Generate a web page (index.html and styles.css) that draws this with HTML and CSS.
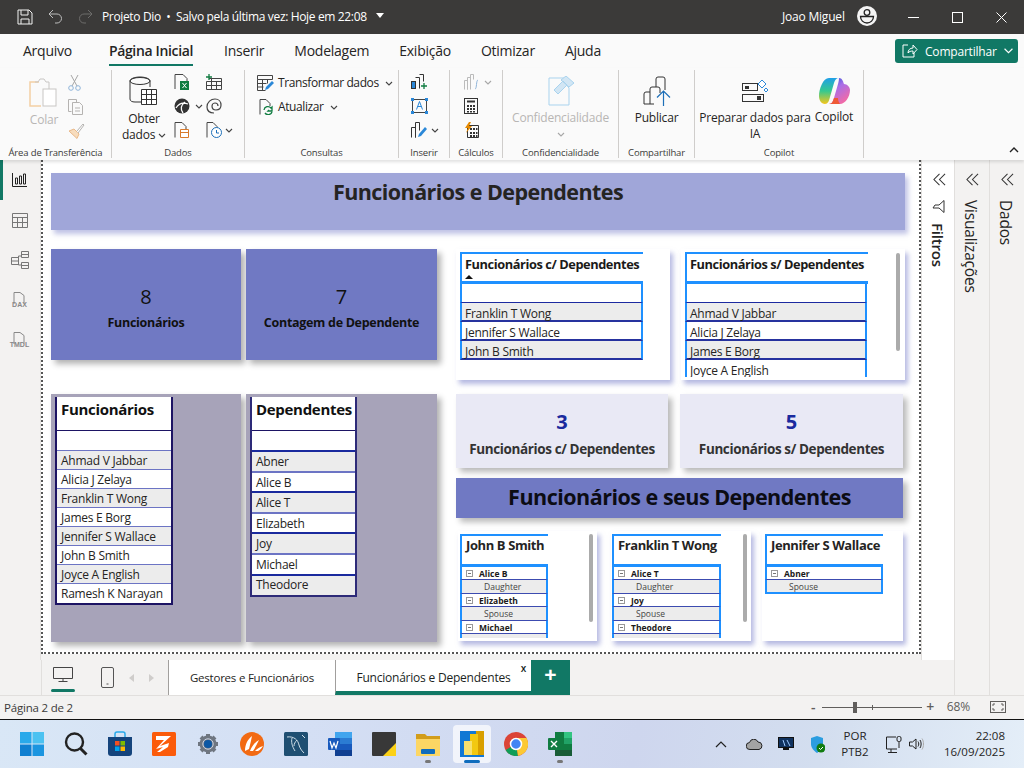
FILE: index.html
```html
<!doctype html>
<html lang="pt-BR">
<head>
<meta charset="utf-8">
<title>Projeto Dio</title>
<link rel="stylesheet" href="styles.css">
</head>
<body>
<svg class="defs" width="0" height="0">
  <symbol id="chev" viewBox="0 0 8 5"><path d="M1 1l3 3 3-3" fill="none" stroke="#444" stroke-width="1.1"/></symbol>
  <symbol id="collapse" viewBox="0 0 14 14"><path d="M7 1L1 7l6 6M13 1L7 7l6 6" fill="none" stroke="#333" stroke-width="1.1"/></symbol>
</svg>

<header class="titlebar">
  <svg class="tb-save" width="16" height="16" viewBox="0 0 16 16"><path d="M1 1h11l3 3v11H1zM4 1v5h7V1M4 15v-5h8v5" fill="none" stroke="#f2f2f2"/></svg>
  <svg class="tb-undo" width="15" height="14" viewBox="0 0 15 14"><path d="M1 5h8a4.500 4.500 0 0 1 0 9H7M1 5l4-4M1 5l4 4" fill="none" stroke="#bdbdbd" transform="translate(0 -1)"/></svg>
  <svg class="tb-redo" width="15" height="14" viewBox="0 0 15 14"><path d="M14 5H6a4.500 4.500 0 0 0 0 9h2M14 5l-4-4M14 5l-4 4" fill="none" stroke="#6d6c6b" transform="translate(0 -1)"/></svg>
  <span class="tb-title">Projeto Dio &nbsp;•&nbsp; Salvo pela última vez: Hoje em 22:08</span>
  <span class="tb-caret"></span>
  <span class="tb-user">Joao Miguel</span>
  <svg class="tb-avatar" width="20" height="20" viewBox="0 0 20 20"><circle cx="10" cy="10" r="10" fill="#f4f4f4"/><circle cx="10" cy="6.500" r="2.800" fill="none" stroke="#222" stroke-width="1.300"/><path d="M3.500 10.500h13a6.500 6.500 0 0 1-13 0z" fill="none" stroke="#222" stroke-width="1.300"/></svg>
  <span class="tb-controls">
    <svg width="11" height="11" viewBox="0 0 11 11"><path d="M0 5.500h11" stroke="#fff"/></svg>
    <svg width="11" height="11" viewBox="0 0 11 11"><rect x=".5" y=".5" width="10" height="10" fill="none" stroke="#fff"/></svg>
    <svg width="11" height="11" viewBox="0 0 11 11"><path d="M.5.500l10 10M10.500.500l-10 10" stroke="#fff"/></svg>
  </span>
</header>

<nav class="menu">
  <a class="menu-item first">Arquivo</a>
  <a class="menu-item active">Página Inicial</a>
  <a class="menu-item">Inserir</a>
  <a class="menu-item">Modelagem</a>
  <a class="menu-item">Exibição</a>
  <a class="menu-item">Otimizar</a>
  <a class="menu-item">Ajuda</a>
  <button class="share">
    <svg width="16" height="14" viewBox="0 0 16 14"><path d="M6 1H1v12h11V9M6 9c0-3 2-5 5-5V1l4 4.500L11 10V7C9 7 7 7.500 6 9z" fill="none" stroke="#fff"/></svg>
    Compartilhar
    <svg width="9" height="6" viewBox="0 0 8 5"><path d="M.5.500L4 4 7.500.500" fill="none" stroke="#fff"/></svg>
  </button>
</nav>

<section class="ribbon">
  <div class="group g-clip">
    <div class="group-body">
      <div class="big disabled">
        <svg width="30" height="31" viewBox="0 0 30 31"><path d="M10 5H1v24h11" fill="none" stroke="#f4cfa4" stroke-width="1.500"/><path d="M6 5h3l2-3h4l2 3h3v7" fill="none" stroke="#c8c6c4"/><rect x="14" y="12" width="13" height="17" fill="#fff" stroke="#c8c6c4"/></svg>
        <span class="big-text">Colar</span>
      </div>
      <div class="stack">
        <svg width="13" height="16" viewBox="0 0 13 16"><path d="M3 0l6 11M10 0L4 11" stroke="#a6a6a6" fill="none"/><circle cx="3" cy="13" r="2.300" fill="none" stroke="#8fb4d9"/><circle cx="10" cy="13" r="2.300" fill="none" stroke="#8fb4d9"/></svg>
        <svg width="16" height="16" viewBox="0 0 16 16"><path d="M3 12H0V0h8v3" fill="none" stroke="#b5b3b1" transform="translate(.5 .5)"/><path d="M4.500 3.500h7l3 3v9h-10zM7 9h5M7 12h5" fill="none" stroke="#b5b3b1"/></svg>
        <svg width="17" height="16" viewBox="0 0 17 16"><path d="M1 8l5-2 5 5-2 4.500z" fill="#f7dcbd" stroke="#e9b98a"/><path d="M9 8l6-7 1 1-6 8" fill="#fff" stroke="#b5b3b1"/></svg>
      </div>
    </div>
    <div class="group-label">Área de Transferência</div>
  </div>

  <div class="group g-data">
    <div class="group-body">
      <div class="big">
        <svg width="30" height="31" viewBox="0 0 30 31"><path d="M16 26H6c-3 0-5-1-5-3V5c0-2 4-4 10-4s10 2 10 4v6" fill="none" stroke="#333"/><ellipse cx="11" cy="5" rx="10" ry="3.500" fill="none" stroke="#333"/><path d="M12.500 13.500h15v15h-15zM12.500 18.500h15M12.500 23.500h15M17.500 13.500v15M22.500 13.500v15" fill="#fff" stroke="#333"/></svg>
        <span class="big-text">Obter<br>dados <svg class="chev" width="8" height="5"><use href="#chev"/></svg></span>
      </div>
      <div class="icon-grid">
        <svg width="16" height="16" viewBox="0 0 16 16"><path d="M1 15V.500h8l4 4V7" fill="none" stroke="#444"/><rect x="6" y="7" width="9" height="9" fill="#107c41"/><path d="M8.500 9l4 5M12.500 9l-4 5" stroke="#fff"/></svg>
        <svg width="16" height="16" viewBox="0 0 16 16"><path d="M3 4.500h12.500v11H.500v-8h15M5.500 4.500v11M10.500 7.500v8M.5 11.500h15" fill="none" stroke="#444"/><path d="M3 0v6M0 3h6" stroke="#107c41" stroke-width="1.300"/></svg>
        <span class="with-chev"><svg width="18" height="16" viewBox="0 0 18 16"><circle cx="8" cy="8" r="7.500" fill="#333"/><path d="M2 10c3-5 7-6 12-4M9 15c-3-4-2-8 2-11" stroke="#fff" fill="none" stroke-width="1.300"/></svg><svg class="chev" width="8" height="5"><use href="#chev"/></svg></span>
        <svg width="16" height="16" viewBox="0 0 16 16"><path d="M8 15c-4 0-7-2-7-6 0-5 4-8 8-8 4 0 6 3 6 6 0 3-2 5-5 5-2 0-4-1-4-4 0-2 2-3 3-3 2 0 3 1 3 3" fill="none" stroke="#444" stroke-width="1.200"/></svg>
        <svg width="16" height="16" viewBox="0 0 16 16"><path d="M1 15.500V.500h7l4 4V7" fill="none" stroke="#444"/><path d="M6.500 7.500h8v8h-8zM6.500 10.500h8" fill="#fff" stroke="#d97a2b"/></svg>
        <span class="with-chev"><svg width="16" height="16" viewBox="0 0 16 16"><path d="M1 15.500V.500h6l4 4V6" fill="none" stroke="#444"/><circle cx="10.500" cy="10.500" r="5" fill="#fff" stroke="#1d6fb8"/><path d="M10.500 8v3h2.500" fill="none" stroke="#1d6fb8"/></svg><svg class="chev" width="8" height="5"><use href="#chev"/></svg></span>
      </div>
    </div>
    <div class="group-label">Dados</div>
  </div>

  <div class="group g-query">
    <div class="group-body rows">
      <span class="row-btn">
        <svg width="17" height="16" viewBox="0 0 17 16"><path d="M.5.500h15v4H.5zM.5 4.500v11h8M5.500 4.500v11M10.500 4.500v4M.5 8.500h9M.5 12h6" fill="none" stroke="#444"/><path d="M8 15l1-3 6-6 2 2-6 6z" fill="#2b88d8"/></svg>
        Transformar dados <svg class="chev" width="8" height="5"><use href="#chev"/></svg>
      </span>
      <span class="row-btn second">
        <svg width="15" height="16" viewBox="0 0 15 16"><path d="M1 15.500V.500h6l4 4V7" fill="none" stroke="#444"/><path d="M5 11a4 4 0 0 1 7-2l1-1v4h-4l1-1M13 13a4 4 0 0 1-7 1" fill="none" stroke="#107c41" stroke-width="1.300"/></svg>
        Atualizar <svg class="chev" width="8" height="5"><use href="#chev"/></svg>
      </span>
    </div>
    <div class="group-label">Consultas</div>
  </div>

  <div class="group g-insert">
    <div class="group-body col">
      <svg width="17" height="16" viewBox="0 0 17 16"><rect x=".5" y="7.500" width="4" height="7" fill="#2b88d8" stroke="#333"/><path d="M4.500 3.500h4v11M8.500.500h4v7" fill="none" stroke="#333"/><path d="M13 9v6M10 12h6" stroke="#107c41" stroke-width="1.300"/></svg>
      <svg width="17" height="16" viewBox="0 0 17 16"><rect x="1.500" y="1.500" width="14" height="13" fill="none" stroke="#444"/><path d="M8.500 3.500l-3 8M8.500 3.500l3 8M6.500 8.500h4" fill="none" stroke="#2b88d8"/><path d="M0 0h3v3H0zM14 0h3v3h-3zM0 13h3v3H0zM14 13h3v3h-3z" fill="#2b88d8"/></svg>
      <span class="with-chev"><svg width="17" height="16" viewBox="0 0 17 16"><path d="M.5 15.500v-10h4v10M4.500 15.500v-15h4v8" fill="none" stroke="#333"/><path d="M7 15l1-3 6-7 2 2-6 7z" fill="#2b88d8"/></svg><svg class="chev" width="8" height="5"><use href="#chev"/></svg></span>
    </div>
    <div class="group-label">Inserir</div>
  </div>

  <div class="group g-calc">
    <div class="group-body col">
      <span class="with-chev"><svg width="17" height="16" viewBox="0 0 17 16"><path d="M.5 15.500v-9h3v9M3.500 15.500V3.500h3v12M6.500 10V.500h3v5" fill="none" stroke="#bbb"/><path d="M11 15c2 0 1-9 3-9" fill="none" stroke="#8fb4d9"/></svg><svg class="chev faint" width="8" height="5"><use href="#chev"/></svg></span>
      <svg width="14" height="16" viewBox="0 0 14 16"><rect x=".5" y=".5" width="13" height="15" fill="none" stroke="#333"/><path d="M3 2.500h8v2H3z" fill="#333"/><path d="M3 7h2v2H3zM6 7h2v2H6zM9 7h2v2H9zM3 10h2v2H3zM6 10h2v2H6zM9 10h2v2H9zM3 13h2v1.500H3zM6 13h2v1.500H6zM9 13h2v1.500H9z" fill="#333"/></svg>
      <svg width="15" height="16" viewBox="0 0 15 16"><path d="M3.500 3.500h11v12h-11z" fill="none" stroke="#333"/><path d="M6 6h2v2H6zM9 6h2v2H9zM12 6h1.500v2H12zM6 10h2v2H6zM9 10h2v2H9zM12 10h1.500v2H12zM6 13h2v2H6zM9 13h2v2H9zM12 13h1.500v2H12z" fill="#333"/><path d="M5 0L1 6h3L2 11l6-7H5l2-4z" fill="#e68a00"/></svg>
    </div>
    <div class="group-label">Cálculos</div>
  </div>

  <div class="group g-conf">
    <div class="group-body centered disabled">
      <svg width="28" height="30" viewBox="0 0 28 30"><path d="M1 2h15v4l5 6v17H1z" fill="none" stroke="#a9d3ee"/><path d="M6 14l9-9 4 4-9 9zM13 4l5-4 8 7-5 4z" fill="#d2e6f4" stroke="#a9d3ee"/></svg>
      <span class="big-text">Confidencialidade<br><svg class="chev faint" width="8" height="5"><use href="#chev"/></svg></span>
    </div>
    <div class="group-label">Confidencialidade</div>
  </div>

  <div class="group g-pub">
    <div class="group-body centered">
      <svg width="28" height="30" viewBox="0 0 28 30"><path d="M11 28H1V18q0-2 2-2h4v-3q0-2 2-2h4V3q0-2 2-2h5q2 0 2 2v11" fill="none" stroke="#333"/><path d="M7 16v12M13 11h2q2 0 2 2v4" fill="none" stroke="#333"/><path d="M20.500 30V15M14 21.500l6.500-6.500 6.500 6.500" fill="none" stroke="#1d6fb8" stroke-width="1.200"/></svg>
      <span class="big-text">Publicar</span>
    </div>
    <div class="group-label">Compartilhar</div>
  </div>

  <div class="group g-copilot">
    <div class="group-body copilot">
      <div class="ai">
        <svg width="26" height="24" viewBox="0 0 26 24"><rect x=".5" y="4.500" width="15" height="7" fill="none" stroke="#333"/><rect x="3" y="7" width="4" height="3" fill="#333"/><rect x=".5" y="15.500" width="21" height="7" fill="none" stroke="#333"/><rect x="15" y="17" width="4" height="4" fill="#333"/><path d="M16 5l4-4 4 4-4 4zM22 11l2-2 2 2-2 2z" fill="#fff" stroke="#2b88d8"/></svg>
        <span class="big-text">Preparar dados para<br>IA</span>
      </div>
      <div class="cop">
        <svg width="31" height="28" viewBox="0 0 31 28"><defs><linearGradient id="cpa" x1="0" y1="0" x2="0" y2="1"><stop offset="0" stop-color="#1f9fe8"/><stop offset=".5" stop-color="#35c98f"/><stop offset="1" stop-color="#f7c61a"/></linearGradient><linearGradient id="cpb" x1="0" y1="0" x2=".6" y2="1"><stop offset="0" stop-color="#1a55d6"/><stop offset=".45" stop-color="#a96ee8"/><stop offset="1" stop-color="#f26aa6"/></linearGradient></defs><path d="M10 1h10c-3 0-4 2-5 5l-4 14c-1 4-2 7-5 7-4 0-6-4-6-8C0 12 4 1 10 1z" fill="url(#cpa)"/><path d="M20 1c3 0 4 3 5 6 3 0 6 3 6 6 0 7-5 14-10 14H10c3 0 4-3 5-6l4-14c1-3 1-6 1-6z" fill="url(#cpb)"/><path d="M10 27c3 0 4-3 5-6h4c0 3 1 4 2 6z" fill="#ef5a35"/></svg>
        <span class="big-text">Copilot</span>
      </div>
    </div>
    <div class="group-label">Copilot</div>
  </div>
  <svg class="ribbon-collapse" width="10" height="6" viewBox="0 0 10 6"><path d="M1 5l4-4 4 4" fill="none" stroke="#222" stroke-width="1.400"/></svg>
</section>

<main class="workspace">
  <aside class="rail">
    <span class="rail-item active"><svg width="15" height="14" viewBox="0 0 15 14"><path d="M.5 0v13.500H15M3.500 11V5h2v6zM7.500 11V3h2v8zM11.500 11V1h2v10z" fill="none" stroke="#222"/></svg></span>
    <span class="rail-item"><svg width="16" height="15" viewBox="0 0 16 15"><path d="M.5.500h15v14H.5zM.5 4.500h15M.5 9.500h15M5.500 4.500v10M10.500 4.500v10" fill="none" stroke="#777"/></svg></span>
    <span class="rail-item"><svg width="18" height="18" viewBox="0 0 18 18"><path d="M.5 6.500h7v7h-7zM.5 10h7M10.500.500h7v6h-7zM10.500 3.500h7M10.500 11.500h7v6h-7zM10.500 14.500h7M7.500 5v9M7.500 5h3M7.500 14h3" fill="none" stroke="#777"/></svg></span>
    <span class="rail-item file"><svg width="17" height="12" viewBox="0 0 17 12"><path d="M3 12V.500h6l4 3v8" fill="none" stroke="#888"/></svg><b>DAX</b></span>
    <span class="rail-item file"><svg width="17" height="12" viewBox="0 0 17 12"><path d="M3 12V.500h6l4 3v8" fill="none" stroke="#888"/></svg><b>TMDL</b></span>
  </aside>

  <div class="canvas">
    <h1 class="banner-top">Funcionários e Dependentes</h1>
    <div class="canvas-body">
      <div class="col-left">
        <div class="cards-row">
          <div class="card-big"><strong>8</strong><span>Funcionários</span></div>
          <div class="card-big"><strong>7</strong><span>Contagem de Dependente</span></div>
        </div>
        <div class="lists-row">
          <div class="list-panel">
            <div class="nlist">
              <div class="nlist-head">Funcionários</div>
              <div class="nlist-blank"></div>
              <div class="nlist-row alt">Ahmad V Jabbar</div>
              <div class="nlist-row">Alicia J Zelaya</div>
              <div class="nlist-row alt">Franklin T Wong</div>
              <div class="nlist-row">James E Borg</div>
              <div class="nlist-row alt">Jennifer S Wallace</div>
              <div class="nlist-row">John B Smith</div>
              <div class="nlist-row alt">Joyce A English</div>
              <div class="nlist-row">Ramesh K Narayan</div>
            </div>
          </div>
          <div class="list-panel">
            <div class="nlist dep">
              <div class="nlist-head">Dependentes</div>
              <div class="nlist-blank"></div>
              <div class="nlist-row alt">Abner</div>
              <div class="nlist-row">Alice B</div>
              <div class="nlist-row alt">Alice T</div>
              <div class="nlist-row">Elizabeth</div>
              <div class="nlist-row alt">Joy</div>
              <div class="nlist-row">Michael</div>
              <div class="nlist-row alt">Theodore</div>
            </div>
          </div>
        </div>
      </div>

      <div class="col-right">
        <div class="tables-row">
          <div class="white-card first">
            <div class="btable">
              <div class="btable-head">Funcionários c/ Dependentes<i class="sort"></i></div>
              <div class="btable-blank"></div>
              <div class="btable-row alt">Franklin T Wong</div>
              <div class="btable-row">Jennifer S Wallace</div>
              <div class="btable-row alt">John B Smith</div>
            </div>
          </div>
          <div class="white-card second">
            <div class="btable open">
              <div class="btable-head">Funcionários s/ Dependentes</div>
              <div class="btable-blank"></div>
              <div class="btable-row alt">Ahmad V Jabbar</div>
              <div class="btable-row">Alicia J Zelaya</div>
              <div class="btable-row alt">James E Borg</div>
              <div class="btable-row">Joyce A English</div>
            </div>
            <i class="thumb"></i>
          </div>
        </div>
        <div class="kpi-row">
          <div class="kpi"><strong>3</strong><span>Funcionários c/ Dependentes</span></div>
          <div class="kpi"><strong>5</strong><span>Funcionários s/ Dependentes</span></div>
        </div>
        <h2 class="banner-mid">Funcionários e seus Dependentes</h2>
        <div class="matrix-row">
          <div class="matrix-card">
            <div class="matrix">
              <div class="matrix-head">John B Smith</div>
              <div class="m-parent"><i class="minus"></i>Alice B</div>
              <div class="m-child">Daughter</div>
              <div class="m-parent"><i class="minus"></i>Elizabeth</div>
              <div class="m-child">Spouse</div>
              <div class="m-parent"><i class="minus"></i>Michael</div>
              <div class="m-child"></div>
            </div>
            <i class="thumb"></i>
          </div>
          <div class="matrix-card">
            <div class="matrix wide">
              <div class="matrix-head">Franklin T Wong</div>
              <div class="m-parent"><i class="minus"></i>Alice T</div>
              <div class="m-child">Daughter</div>
              <div class="m-parent"><i class="minus"></i>Joy</div>
              <div class="m-child">Spouse</div>
              <div class="m-parent"><i class="minus"></i>Theodore</div>
              <div class="m-child"></div>
            </div>
            <i class="thumb"></i>
          </div>
          <div class="matrix-card">
            <div class="matrix wider closed">
              <div class="matrix-head">Jennifer S Wallace</div>
              <div class="m-parent"><i class="minus"></i>Abner</div>
              <div class="m-child">Spouse</div>
            </div>
          </div>
        </div>
      </div>
    </div>
  </div>

  <aside class="pane filters">
    <svg class="pane-arrow" width="13" height="13"><use href="#collapse"/></svg>
    <div class="pane-title"><svg class="funnel" width="13" height="13" viewBox="0 0 13 13"><path d="M.5 1h12L8 6v6L5 10V6z" fill="none" stroke="#333"/></svg>Filtros</div>
  </aside>
  <aside class="pane grey">
    <svg class="pane-arrow" width="13" height="13"><use href="#collapse"/></svg>
    <div class="pane-title">Visualizações</div>
  </aside>
  <aside class="pane grey">
    <svg class="pane-arrow" width="13" height="13"><use href="#collapse"/></svg>
    <div class="pane-title">Dados</div>
  </aside>
</main>

<div class="page-tabs">
  <div class="view-switch">
    <span class="view active"><svg width="20" height="16" viewBox="0 0 20 16"><path d="M.5.500h19v11H.5zM10 11.500v3M5.500 14.500h9" fill="none" stroke="#444"/></svg></span>
    <span class="view"><svg width="13" height="21" viewBox="0 0 13 21"><rect x=".5" y=".5" width="12" height="20" rx="1.500" fill="none" stroke="#555"/><path d="M5.500 17h2" stroke="#555"/></svg></span>
  </div>
  <span class="tab-arrows"><i class="arrow-l"></i><i class="arrow-r"></i></span>
  <div class="page-tab">Gestores e Funcionários</div>
  <div class="page-tab current">Funcionários e Dependentes<em>x</em></div>
  <div class="page-add">+</div>
  <div class="tabs-fill"><i></i><i></i></div>
</div>

<footer class="status">
  <span class="page-no">Página 2 de 2</span>
  <div class="zoom">
    <span class="z-sign">-</span>
    <span class="z-track"><i class="z-thumb"></i><i class="z-tick"></i></span>
    <span class="z-sign">+</span>
    <span class="z-val">68%</span>
    <svg width="16" height="12" viewBox="0 0 16 12"><rect x=".5" y=".5" width="15" height="11" fill="none" stroke="#605e5c"/><path d="M3 5V3h2M11 3h2v2M13 7v2h-2M5 9H3V7" fill="none" stroke="#605e5c"/></svg>
  </div>
</footer>

<div class="taskbar">
  <div class="apps">
    <span class="app"><svg width="24" height="24" viewBox="0 0 24 24"><path d="M0 0h11.500v11.500H0z" fill="#29a9ea"/><path d="M12.500 0H24v11.500H12.500z" fill="#4cc2f1"/><path d="M0 12.500h11.500V24H0z" fill="#0f7fd0"/><path d="M12.500 12.500H24V24H12.500z" fill="#1b95e0"/></svg></span>
    <span class="app"><svg width="24" height="24" viewBox="0 0 24 24"><circle cx="10.500" cy="10" r="8.500" fill="none" stroke="#222" stroke-width="2.400"/><path d="M16.500 16.500l6 6" stroke="#222" stroke-width="3"/></svg></span>
    <span class="app"><svg width="24" height="26" viewBox="0 0 24 26"><path d="M7 6V3q0-2 2-2h6q2 0 2 2v3" fill="none" stroke="#29a9ea" stroke-width="1.500"/><path d="M0 6h24v16q0 3-3 3H3q-3 0-3-3z" fill="#15447c"/><path d="M7 10h4.500v4.500H7z" fill="#f25022"/><path d="M12.500 10H17v4.500h-4.500z" fill="#7fba00"/><path d="M7 15.500h4.500V20H7z" fill="#00a4ef"/><path d="M12.500 15.500H17V20h-4.500z" fill="#ffb900"/></svg></span>
    <span class="app"><svg width="24" height="24" viewBox="0 0 24 24"><rect width="24" height="24" rx="1.500" fill="#fb5b0a"/><path d="M4 4h15L8 14l9-3-1 4-8 5h-3l6-5-7 2 8-9H4z" fill="#fff"/></svg></span>
    <span class="app"><svg width="24" height="24" viewBox="0 0 24 24"><path d="M12 2v20M2 12h20M5 5l14 14M19 5L5 19" stroke="#6f7680" stroke-width="4"/><circle cx="12" cy="12" r="8.500" fill="#6f7680"/><circle cx="12" cy="12" r="4" fill="#0b57a4"/><circle cx="12" cy="12" r="5.200" fill="none" stroke="#c9d3e4"/></svg></span>
    <span class="app"><svg width="24" height="24" viewBox="0 0 24 24"><circle cx="12" cy="12" r="12" fill="#f26a13"/><path d="M5 19c0-7 3-12 7-15-1 5-2 9-3 13zM10 19c2-5 5-9 9-11-2 4-4 8-6 11zM15 19c2-2 4-4 8-5-2 3-3 4-5 5z" fill="#fff"/></svg></span>
    <span class="app"><svg width="24" height="24" viewBox="0 0 24 24"><rect width="24" height="24" rx="1.500" fill="#1f4f72"/><path d="M3 5c7-1 11 3 12 8 1 3 2 5 5 8M8 6c-1 4 0 8 3 13M13 8c-2 2-3 4-3 6M18 3l3 3" fill="none" stroke="#cfdfe8"/></svg></span>
    <span class="app"><svg width="24" height="24" viewBox="0 0 24 24"><path d="M7 0h17v6H7z" fill="#41a5ee"/><path d="M7 6h17v6H7z" fill="#2b7cd3"/><path d="M7 12h17v6H7z" fill="#185abd"/><path d="M7 18h17v6H7z" fill="#103f91"/><rect y="6" width="12" height="12" rx="1" fill="#185abd"/><path d="M2 9l2 7 2-5 2 5 2-7" fill="none" stroke="#fff" stroke-width="1.200"/></svg></span>
    <span class="app"><svg width="24" height="24" viewBox="0 0 24 24"><rect width="24" height="24" rx="1" fill="#383838"/><path d="M24 11v13H11z" fill="#fcd116"/></svg></span>
    <span class="app dot"><svg width="24" height="24" viewBox="0 0 24 24"><path d="M0 2h9l2 2h13v4H0z" fill="#d29d1b"/><path d="M0 7h24v17H0z" fill="#fcd664"/><rect x="5" y="17" width="14" height="5" rx="1" fill="#0f6cbd"/></svg></span>
    <span class="app running"><svg width="24" height="26" viewBox="0 0 24 26"><rect width="24" height="26" fill="#1178d4"/><path d="M16 0h8v26h-8z" fill="#d89f00"/><path d="M10 3h8v23h-8z" fill="#f2c811"/><path d="M4 10h8v16H4z" fill="#f7e06e"/><path d="M0 24h24v2H0z" fill="#1178d4"/></svg></span>
    <span class="app"><svg width="24" height="24" viewBox="0 0 24 24"><circle cx="12" cy="12" r="12" fill="#db4437"/><path d="M12 12L1.600 18A12 12 0 0 0 14 23.800z" fill="#0f9d58"/><path d="M12 6h10.500A12 12 0 0 1 14 23.800L12 12z" fill="#fcc934"/><circle cx="12" cy="12" r="5.500" fill="#4285f4" stroke="#fff" stroke-width="1.500"/></svg></span>
    <span class="app dot"><svg width="24" height="24" viewBox="0 0 24 24"><path d="M7 0h17v24H7z" fill="#107c41"/><path d="M16 0h8v6h-8z" fill="#33c481"/><path d="M16 6h8v6h-8z" fill="#21a366"/><path d="M16 18h8v6h-8zM7 18h9v6H7z" fill="#185c37"/><rect y="6" width="12" height="12" rx="1" fill="#107c41"/><path d="M3 9l6 6M9 9l-6 6" stroke="#fff" stroke-width="1.400"/></svg></span>
  </div>
  <div class="tray">
    <svg class="t-up" width="12" height="7" viewBox="0 0 12 7"><path d="M1 6l5-5 5 5" fill="none" stroke="#222" stroke-width="1.200"/></svg>
    <svg class="t-cloud" width="17" height="11" viewBox="0 0 17 11"><path d="M4 10.500a3.500 3.500 0 0 1-.5-7A4.500 4.500 0 0 1 12 3a3.800 3.800 0 0 1 1 7.500z" fill="#a3a3a3" stroke="#222"/></svg>
    <svg class="t-mon" width="16" height="14" viewBox="0 0 16 14"><rect width="16" height="11" fill="#111"/><path d="M1 1h14v9H1z" fill="#10325f"/><path d="M5 3l2 6M9 3l3 6" stroke="#9cc9ff"/><path d="M5 11h6v2H5z" fill="#111"/></svg>
    <svg class="t-shield" width="15" height="17" viewBox="0 0 15 17"><path d="M7 0l6 2v6c0 4-3 7-6 9-3-2-6-5-6-9V2z" fill="#2b9de0"/><circle cx="11" cy="12" r="4.500" fill="#107c10"/><path d="M9 12l1.500 1.500L13 11" stroke="#fff" fill="none"/></svg>
    <span class="t-lang">POR<br>PTB2</span>
    <svg class="t-net" width="16" height="17" viewBox="0 0 16 17"><path d="M10 1H.5v12H11M5 13v3M2 16.500h9" fill="none" stroke="#222"/><rect x="11" y=".5" width="4" height="5" rx="1.500" fill="none" stroke="#222"/><path d="M13 5.500V12" stroke="#222"/></svg>
    <svg class="t-vol" width="16" height="12" viewBox="0 0 16 12"><path d="M.5 4h3L7 1v10L3.500 8h-3zM9 3.500c1 1.500 1 3.500 0 5M11 2c1.500 2 1.500 6 0 8" fill="none" stroke="#222"/><path d="M13 .5c2 3 2 8 0 11" fill="none" stroke="#aaa"/></svg>
    <span class="t-clock">22:08<br>16/09/2025</span>
  </div>
</div>
</body>
</html>
```

FILE: styles.css
```css
* { box-sizing: border-box; }
html, body { height: 100%; }
body { margin: 0; width: 1024px; height: 768px; overflow: hidden; display: flex; flex-direction: column; font: 12px/1.2 "Open Sans", "Noto Sans", sans-serif; color: #252423; background-color: #f3f2f1; }
.defs { position: absolute; }
svg { display: block; flex: none; }
h1, h2 { margin: 0; }
i, em { font-style: normal; display: block; }

/* title bar */
.titlebar { height: 34px; flex: none; display: flex; align-items: center; background-color: #3b3a39; color: #fff; padding-left: 17px; }
.tb-undo { margin-left: 15px; }
.tb-redo { margin-left: 15px; }
.tb-title { margin-left: 9px; font-size: 12px; letter-spacing: -.35px; white-space: nowrap; width: 272px; }
.tb-caret { width: 0; height: 0; border: 4px solid transparent; border-top: 5px solid #fff; border-bottom: 0; margin-left: 2px; margin-top: -3px; }
.tb-user { margin-left: 398px; font-size: 12px; letter-spacing: -.2px; width: 75px; }
.tb-avatar { margin-top: -2px; }
.tb-controls { display: flex; gap: 33px; margin-left: 31px; }

/* menu */
.menu { height: 34px; flex: none; display: flex; align-items: center; background-color: #fafafa; padding-left: 23px; position: relative; }
.menu-item { font-size: 14px; margin-right: 30px; letter-spacing: -.25px; line-height: 30px; height: 30px; }
.menu-item.first { margin-right: 37px; }
.menu-item.active { font-weight: 600; border-bottom: 2px solid #117865; height: 30px; letter-spacing: -.35px; margin-right: 31px; }
.share { margin-left: auto; margin-right: 6px; width: 123px; height: 24px; display: flex; align-items: center; gap: 7px; padding: 0 0 0 7px; background-color: #117865; color: #fff; border: 0; border-radius: 3px; font: 12px "Open Sans", sans-serif; letter-spacing: -.2px; }

/* ribbon */
.ribbon { height: 92px; flex: none; display: flex; background-color: #fafafa; box-shadow: 0 2px 3px rgba(0,0,0,.12); position: relative; z-index: 2; padding-top: 2px; }
.group { height: 88px; border-right: 1px solid #cfcdcb; display: flex; flex-direction: column; flex: none; }
.group-body { height: 77px; flex: none; display: flex; }
.group-label { font-size: 9.500px; text-align: center; white-space: nowrap; letter-spacing: -.15px; line-height: 11px; color: #3b3a39; }
.g-clip { width: 112px; }
.g-data { width: 133px; }
.g-query { width: 154px; }
.g-insert { width: 51px; }
.g-calc { width: 53px; }
.g-conf { width: 116px; }
.g-pub { width: 76px; }
.g-copilot { width: 169px; }
.big { display: flex; flex-direction: column; align-items: center; padding-top: 7px; }
.big-text { font-size: 12px; line-height: 16px; text-align: center; margin-top: 4px; letter-spacing: -.2px; }
.big-text .chev { display: inline-block; vertical-align: middle; }
.disabled .big-text { color: #b8b6b4; }
.g-clip .big { width: 58px; margin-left: 15px; }
.stack { display: flex; flex-direction: column; gap: 8px; padding-top: 5px; margin-left: -5px; }
.g-data .big { width: 60px; margin-left: 2px; padding-top: 6px; }
.icon-grid { display: grid; grid-template-columns: 32px 26px; grid-auto-rows: 24px; padding-top: 4px; }
.with-chev { display: flex; align-items: center; gap: 3px; height: 16px; }
.rows { flex-direction: column; padding: 5px 0 0 12px; }
.row-btn { display: flex; align-items: center; gap: 4px; font-size: 12px; height: 16px; letter-spacing: -.4px; white-space: nowrap; }
.row-btn .chev { margin-left: 2px; }
.row-btn.second { margin-top: 8px; padding-left: 2px; }
.col { flex-direction: column; gap: 8px; padding: 4px 0 0 12px; }
.g-calc .col { padding-left: 14px; }
.centered { flex-direction: column; align-items: center; padding-top: 6px; }
.g-conf svg:first-child { margin-left: 3px; }
.copilot { padding-top: 7px; }
.ai { width: 120px; display: flex; flex-direction: column; align-items: center; padding: 0 8px; }
.ai svg { margin-top: 2px; }
.ai .big-text { margin-top: 7px; white-space: nowrap; }
.cop { display: flex; flex-direction: column; align-items: center; margin-left: -1px; width: 40px; }
.cop .big-text { margin-top: 4px; }
.faint { opacity: .45; }
.ribbon-collapse { position: absolute; right: 5px; top: 79px; }

/* workspace */
.workspace { height: 500px; flex: none; display: flex; }
.rail { width: 41px; flex: none; background-color: #f3f2f1; border-right: 1px solid #e1dfdd; display: flex; flex-direction: column; }
.rail-item { height: 40px; display: flex; flex-direction: column; align-items: center; justify-content: center; padding-right: 1px; }
.rail-item.active { box-shadow: inset 3px 0 0 #117865; }
.rail-item b { font: 700 7px/8px "Liberation Sans", sans-serif; color: #888; margin-top: -3px; }
.canvas { width: 880px; flex: none; height: 494px; background-color: #fff; border: 2px dotted #555; border-width: 0 2px 2px 2px; padding: 13px 14px 0 8px; }
.banner-top { width: 854px; height: 57px; background-color: #a0a6d9; box-shadow: 3px 4px 5px rgba(130,136,205,.5); text-align: center; font: 700 21.500px/38px "Open Sans", sans-serif; letter-spacing: -.55px; color: #252423; }
.canvas-body { display: flex; gap: 19px; margin-top: 19px; }
.col-left { width: 386px; }
.cards-row { display: flex; gap: 5px; }
.card-big { width: 191px; height: 111px; background-color: #7079c3; box-shadow: 4px 4px 6px rgba(0,0,0,.3); display: flex; flex-direction: column; align-items: center; padding-top: 34px; color: #111; }
.card-big:first-child { width: 190px; }
.card-big strong { font-size: 20px; font-weight: 400; line-height: 28px; }
.card-big span { font-size: 12.500px; font-weight: 700; letter-spacing: -.3px; margin-top: 4px; }
.lists-row { display: flex; gap: 5px; margin-top: 34px; }
.list-panel { width: 191px; height: 248px; background-color: #a7a3b9; box-shadow: 4px 4px 6px rgba(0,0,0,.3); padding: 3px 0 0 4px; }
.list-panel:first-child { width: 190px; }
.nlist { width: 118px; background-color: #fff; border-left: 2px solid #1d1464; border-right: 2px solid #1d1464; border-bottom: 2px solid #1d1464; }
.nlist.dep { width: 107px; border-color: #2d2a78; }
.nlist-head { height: 34px; padding: 3px 0 0 4px; font-size: 15px; font-weight: 700; letter-spacing: -.3px; color: #111; border-bottom: 1px solid #1d1464; }
.nlist-blank { height: 20px; border-bottom: 1px solid #6c74c4; }
.nlist-row { height: 19px; padding-left: 4px; font-size: 12px; line-height: 20px; letter-spacing: -.25px; white-space: nowrap; border-bottom: 1px solid #6c74c4; }
.nlist-row:last-child { border-bottom: 0; }
.alt { background-color: #ececec; }
.dep .nlist-blank { height: 21px; border-bottom: 2px solid #1a2a9e; }
.dep .nlist-row { height: 20.600px; line-height: 20px; border-bottom: 2px solid #1a2a9e; }
.dep .nlist-row.alt { border-bottom-color: #6c74c4; }
.dep .nlist-row:last-child { height: 19px; line-height: 18px; border-bottom: 0; }
.col-right { width: 449px; display: flex; flex-direction: column; }
.tables-row { display: flex; gap: 11px; }
.white-card { height: 131px; width: 214px; background-color: #fff; box-shadow: 3px 4px 5px rgba(130,136,205,.6); padding: 3px 0 0 4px; position: relative; }
.white-card.second { width: 224px; }
.btable { width: 183px; height: 110px; overflow: hidden; }
.btable.open { height: 125px; }
.btable-head { position: relative; height: 32px; padding: 3px 0 0 3px; border: solid #1e90ff; border-width: 2px 0 3px 2px; font-size: 12.800px; font-weight: 700; letter-spacing: -.42px; white-space: nowrap; color: #1b1a19; }
.sort { position: absolute; left: 3px; top: 21px; width: 0; height: 0; border: 4px solid transparent; border-bottom: 4px solid #111; border-top: 0; }
.btable-blank { height: 19px; border: solid #1e90ff; border-width: 0 2px; border-bottom: 1px solid #1c2aa0; }
.btable-row { height: 19px; border: solid #1e90ff; border-width: 0 2px; border-bottom: 2px solid #26329e; padding-left: 3px; font-size: 12px; line-height: 22px; letter-spacing: -.25px; }
.open .btable-blank, .open .btable-row { margin-right: 1px; }
.open .btable-row:last-child { border-bottom: 0; }
.thumb { position: absolute; right: 5px; top: 4px; width: 4px; height: 98px; border-radius: 2px; background-color: #ababab; }
.kpi-row { display: flex; gap: 12px; margin-top: 14px; }
.kpi { width: 212px; height: 74px; background-color: #e9e9f5; box-shadow: 4px 4px 6px rgba(0,0,0,.28); display: flex; flex-direction: column; align-items: center; padding-top: 14px; }
.kpi:last-child { width: 223px; }
.kpi strong { font-size: 20px; font-weight: 700; color: #1a2a9e; line-height: 28px; }
.kpi span { font-size: 13.500px; font-weight: 700; letter-spacing: -.38px; color: #333; margin-top: 5px; }
.banner-mid { width: 447px; height: 40px; margin-top: 10px; background-color: #7079c3; box-shadow: 4px 4px 6px rgba(0,0,0,.28); text-align: center; font: 700 21.500px/38px "Open Sans", sans-serif; letter-spacing: -.5px; color: #0c0c14; }
.matrix-row { display: flex; margin: 13px 0 0 2px; }
.matrix-card { width: 139px; height: 110px; background-color: #fff; box-shadow: 3px 4px 5px rgba(130,136,205,.6); padding: 3px 0 0 2px; position: relative; }
.matrix-card:nth-child(2) { width: 140px; margin-left: 14px; padding-left: 1px; }
.matrix-card:last-child { width: 141px; margin-left: 11px; padding-left: 3px; }
.matrix { width: 88px; height: 104px; overflow: hidden; }
.matrix.wide { width: 109px; }
.matrix.wider { width: 118px; height: auto; }
.matrix-head { height: 33px; padding: 2px 0 0 4px; border: solid #1e90ff; border-width: 2px 0 3px 2px; font-size: 13px; font-weight: 700; letter-spacing: -.4px; white-space: nowrap; }
.m-parent, .m-child { height: 14px; border: solid #1e90ff; border-width: 0 2px; border-bottom: 1px solid #3c4bb0; font-size: 8.500px; line-height: 13px; white-space: nowrap; }
.m-parent { font-weight: 700; padding-left: 4px; display: flex; align-items: center; gap: 6px; color: #1b1a19; height: 13px; }
.m-child { padding-left: 22px; background-color: #ececec; color: #444; }
.closed .m-child { border-bottom: 2px solid #1e90ff; }
.minus { width: 7px; height: 7px; border: 1px solid #999; position: relative; flex: none; }
.minus::after { content: ""; position: absolute; left: 1px; right: 1px; top: 2px; height: 1px; background-color: #777; }
.matrix-card .thumb { top: 3px; right: 4px; height: 88px; }

/* side panes */
.pane { width: 33px; flex: none; position: relative; padding-top: 13px; border-left: 1px solid #e1dfdd; }
.filters { background-color: #fff; }
.grey { width: 35px; background-color: #f3f2f1; }
.pane-arrow { margin: 0 0 0 11px; }
.pane-title { writing-mode: vertical-rl; font-size: 15.500px; letter-spacing: -.2px; margin: 14px 0 0 6px; color: #252423; display: flex; align-items: center; gap: 10px; }
.funnel { transform: rotate(90deg); }
.filters .pane-title { font-size: 15px; font-weight: 600; margin: 14px 0 0 7px; }

/* page tabs */
.page-tabs { height: 35px; flex: none; display: flex; background-color: #f3f2f1; }
.view-switch { width: 127px; margin-left: 41px; border-left: 1px solid #e1dfdd; display: flex; }
.view { display: flex; justify-content: center; height: 35px; padding-top: 8px; }
.view:first-child { width: 24px; margin-left: 9px; position: relative; padding-top: 7px; }
.view:first-child::after { content: ""; position: absolute; left: 0; right: 0; bottom: 3px; height: 3px; border-radius: 2px; background-color: #117865; }
.view:last-child { margin-left: 24px; width: 16px; padding-top: 7px; }
.tab-arrows { margin-left: -40px; width: 40px; display: flex; gap: 15px; align-items: center; padding-left: 1px; }
.arrow-l, .arrow-r { width: 0; height: 0; border: 4px solid transparent; }
.arrow-l { border-right: 5px solid #cfcdcb; border-left: 0; }
.arrow-r { border-left: 5px solid #cfcdcb; border-right: 0; }
.page-tab { background-color: #fff; border-left: 1px solid #a19f9d; width: 167px; font-size: 11.500px; letter-spacing: -.22px; line-height: 36px; text-align: center; position: relative; }
.page-tab.current { width: 196px; border-bottom: 4px solid #117865; color: #201f1e; font-size: 12px; font-weight: 500; }
.page-tab em { position: absolute; right: 5px; top: 0; font-size: 10px; line-height: 17px; font-weight: 600; }
.page-add { width: 39px; background-color: #117865; color: #fff; font: 700 21px/30px "Liberation Sans", sans-serif; text-align: center; }
.tabs-fill { flex: 1; display: flex; justify-content: flex-end; }
.tabs-fill i { width: 35px; border-left: 1px solid #e1dfdd; }

/* status */
.status { height: 24px; flex: none; display: flex; align-items: center; justify-content: space-between; background-color: #f3f2f1; border-top: 1px solid #e1dfdd; padding: 0 18px 0 4px; }
.page-no { font-size: 11.500px; letter-spacing: -.2px; color: #3b3a39; }
.zoom { display: flex; align-items: center; color: #605e5c; }
.z-sign { font-size: 14px; font-weight: 600; width: 9px; text-align: center; }
.z-track { width: 100px; height: 1px; margin: 0 4px; background-color: #605e5c; position: relative; }
.z-thumb { position: absolute; left: 31px; top: -5px; width: 4px; height: 11px; background-color: #605e5c; }
.z-tick { position: absolute; left: 50px; top: -2px; width: 1px; height: 5px; background-color: #605e5c; }
.z-val { margin: 0 20px 0 12px; font-size: 12px; letter-spacing: -.1px; }

/* taskbar */
.taskbar { height: 49px; flex: none; display: flex; justify-content: space-between; border-top: 1px solid #111; background: linear-gradient(100deg, #d9e7f6 0%, #d4dff4 30%, #ced6ee 62%, #d3deef 80%, #e4eef8 100%); }
.apps { display: flex; padding-left: 10px; }
.app { width: 44px; height: 48px; display: flex; align-items: center; justify-content: center; position: relative; padding-bottom: 1px; }
.app.dot::after { content: ""; position: absolute; left: 19px; bottom: 5px; width: 6px; height: 3px; border-radius: 2px; background-color: #777; }
.app.running::before { content: ""; position: absolute; left: 3px; right: 3px; top: 5px; bottom: 5px; background-color: rgba(255,255,255,.7); border-radius: 4px; }
.app.running svg { position: relative; }
.app.running::after { content: ""; position: absolute; left: 14px; bottom: 5px; width: 16px; height: 3px; border-radius: 2px; background-color: #0f6cbd; }
.tray { display: flex; align-items: center; padding-right: 19px; }
.t-lang { width: 38px; margin-left: 11px; text-align: center; font-size: 11.500px; line-height: 16px; }
.t-up { margin-right: 19px; }
.t-cloud { margin-right: 15px; }
.t-mon { margin-right: 16px; }
.t-net { margin-left: 12px; }
.t-vol { margin-left: 7px; }
.t-clock { margin-left: 18px; width: 62px; text-align: right; font-size: 11.500px; line-height: 16px; }
```
